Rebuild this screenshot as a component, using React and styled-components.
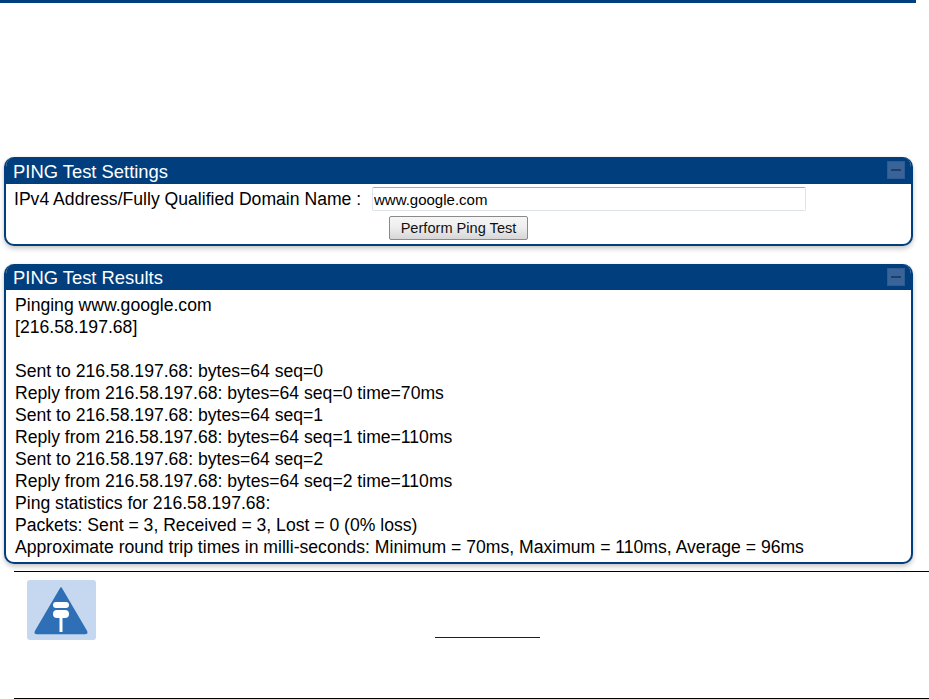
import React from "react";
import styled, { createGlobalStyle } from "styled-components";

const GlobalStyle = createGlobalStyle`
html, body {
  margin: 0;
  padding: 0;
  background: #fff;
  overflow: hidden;
}
`

const Page = styled.div`
width: 929px;
height: 699px;
font-family: "Liberation Sans", Arial, sans-serif;
color: #000;
overflow: hidden;
`

const TopBar = styled.div`
width: 916px;
height: 3px;
background-color: #003e7e;
`

const Panels = styled.div`
display: flex;
flex-direction: column;
gap: 18px;
width: 909px;
margin: 154px 0 0 4px;
`

const Panel = styled.section`
border: 2px solid #003e7e;
border-top: none;
border-radius: 10px;
background: #fff;
box-shadow: 0 3px 5px rgba(0, 0, 0, 0.2), 0 0 3px rgba(0, 0, 0, 0.06);
overflow: hidden;
`

const PanelHeader = styled.div`
display: flex;
align-items: center;
justify-content: space-between;
height: ${({ $tall }) => ($tall ? 27 : 26)}px;
margin: 0 -2px;
padding: 2px 8px 0 9px;
box-sizing: border-box;
background-color: #003e7e;
color: #fff;
font-size: 18.4px;
`

const Collapse = styled.span`
display: flex;
align-items: center;
justify-content: center;
width: 18px;
height: 18px;
box-sizing: border-box;
margin-top: -3px;
background-color: #3a6397;
border: 1px solid #2f5a92;
`

const Dash = styled.span`
width: 10px;
height: 2px;
background-color: #1c3f70;
`

const SettingsBody = styled.div`
height: 60px;
padding: 3px 0 0 8px;
box-sizing: border-box;
`

const FormRow = styled.div`
display: flex;
align-items: center;
font-size: 17.6px;
height: 24px;
`

const Label = styled.label`
width: 358px;
flex-shrink: 0;
white-space: nowrap;
`

const AddressInput = styled.input`
width: 434px;
height: 24px;
box-sizing: border-box;
padding: 0 1px;
border: 1px solid #dfe3ea;
border-top-color: #a9a9a9;
border-radius: 2px;
font-family: "Liberation Sans", Arial, sans-serif;
font-size: 15px;
color: #000;
outline: none;
`

const ButtonRow = styled.div`
display: flex;
justify-content: center;
margin-top: 5px;
padding-right: 8px;
`

const PingButton = styled.button`
width: 139px;
height: 24px;
padding: 0;
border: 1px solid #8a8a8a;
border-radius: 2px;
background: linear-gradient(#f6f6f6, #ededed 50%, #d6d6d6);
font-family: "Liberation Sans", Arial, sans-serif;
font-size: 14.6px;
color: #111;
`

const Results = styled.div`
height: 272px;
padding: 4px 0 0 9px;
box-sizing: border-box;
font-size: 17.6px;
line-height: 22px;
`

const ResultLine = styled.div`
min-height: 22px;
white-space: nowrap;
`

const Note = styled.div`
display: flex;
height: 128px;
margin: 7px 0 0 14px;
padding-top: 8px;
box-sizing: border-box;
border-top: 1px solid #000;
border-bottom: 1px solid #000;
`

const NoteIcon = styled.svg`
width: 69px;
height: 60px;
margin-left: 13px;
flex-shrink: 0;
`

const NoteBody = styled.div`
padding: 47px 0 0 339px;
`

const EmptyLink = styled.a`
display: block;
width: 105px;
height: 10px;
border-bottom: 1px solid #0000ff;
`

const resultLines = [
  "Pinging www.google.com",
  "[216.58.197.68]",
  "",
  "Sent to 216.58.197.68: bytes=64 seq=0",
  "Reply from 216.58.197.68: bytes=64 seq=0 time=70ms",
  "Sent to 216.58.197.68: bytes=64 seq=1",
  "Reply from 216.58.197.68: bytes=64 seq=1 time=110ms",
  "Sent to 216.58.197.68: bytes=64 seq=2",
  "Reply from 216.58.197.68: bytes=64 seq=2 time=110ms",
  "Ping statistics for 216.58.197.68:",
  "Packets: Sent = 3, Received = 3, Lost = 0 (0% loss)",
  "Approximate round trip times in milli-seconds: Minimum = 70ms, Maximum = 110ms, Average = 96ms",
];

const App = () => {
  return (
    <Page>
      <GlobalStyle />
      <TopBar />
      <Panels>
        <Panel>
          <PanelHeader $tall>
            PING Test Settings
            <Collapse><Dash /></Collapse>
          </PanelHeader>
          <SettingsBody>
            <FormRow>
              <Label>IPv4 Address/Fully Qualified Domain Name :</Label>
              <AddressInput defaultValue="www.google.com" />
            </FormRow>
            <ButtonRow>
              <PingButton>Perform Ping Test</PingButton>
            </ButtonRow>
          </SettingsBody>
        </Panel>
        <Panel>
          <PanelHeader>
            PING Test Results
            <Collapse><Dash /></Collapse>
          </PanelHeader>
          <Results>
            {resultLines.map((line, i) => (
              <ResultLine key={i}>{line}</ResultLine>
            ))}
          </Results>
        </Panel>
      </Panels>
      <Note>
        <NoteIcon viewBox="0 0 69 60">
          <rect width="69" height="60" rx="3" fill="#c5d8f0" />
          <path d="M34 8 L59.500 51.500 Q60.500 53.500 58 53.500 H10 Q7.500 53.500 8.500 51.500 Z" fill="#2e6fb5" stroke="#2e6fb5" strokeWidth="1.500" strokeLinejoin="round" />
          <rect x="26" y="22" width="16" height="6" rx="3" fill="#fff" />
          <rect x="26" y="30" width="16" height="8" rx="4" fill="#fff" />
          <rect x="32.500" y="37" width="3" height="15" fill="#fff" />
        </NoteIcon>
        <NoteBody>
          <EmptyLink />
        </NoteBody>
      </Note>
    </Page>
  );
}

export default App;
